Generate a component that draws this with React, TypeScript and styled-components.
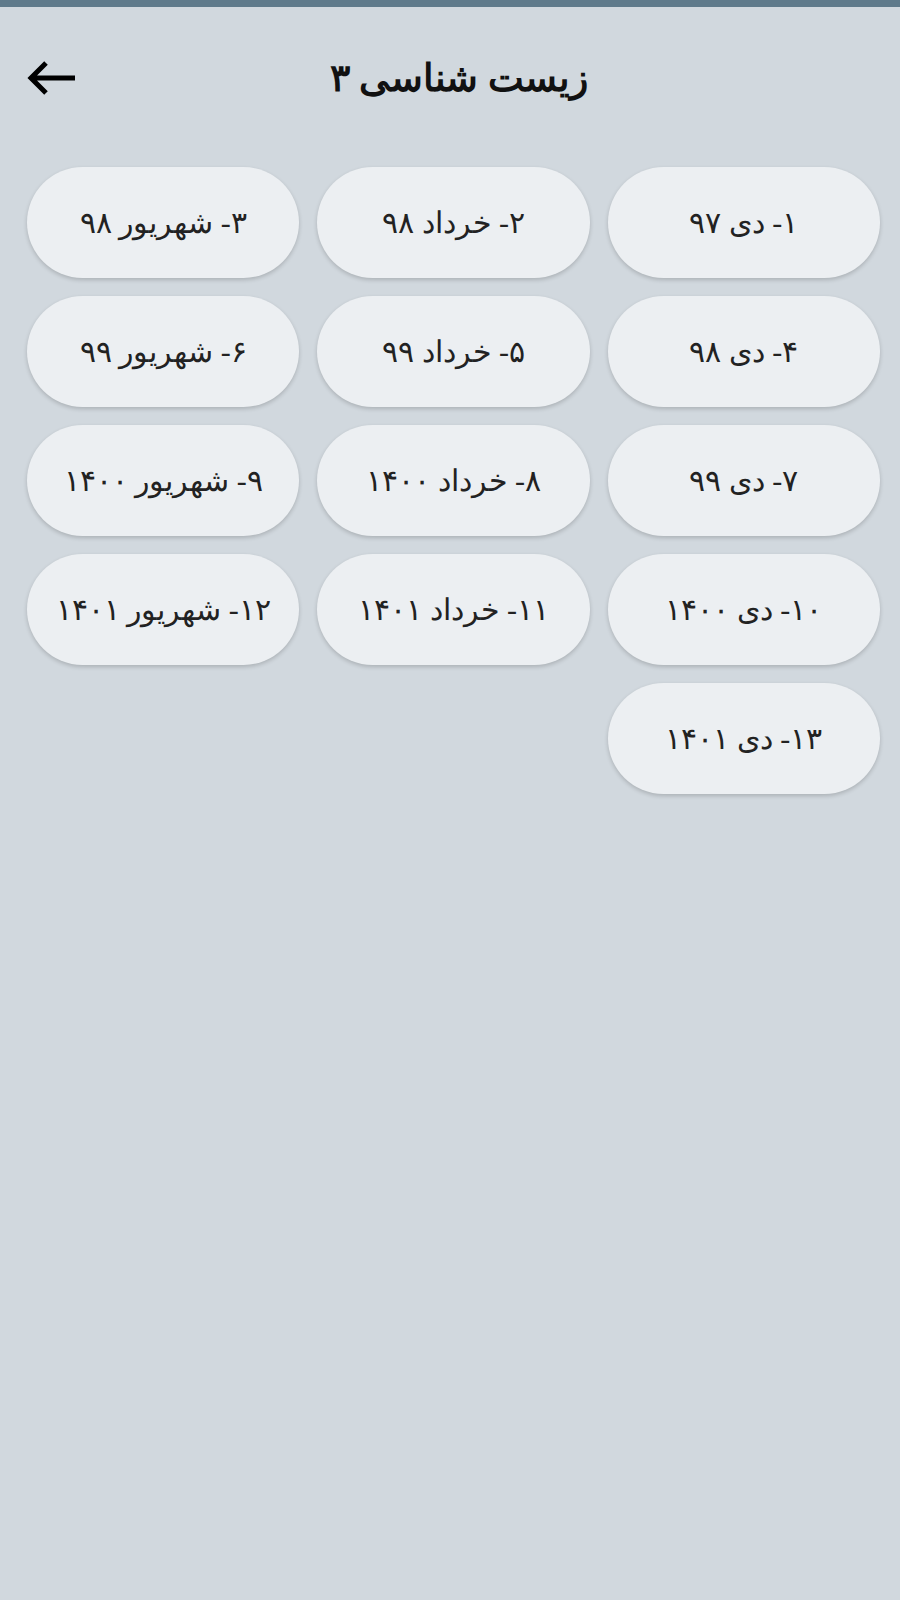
import React from 'react';
import styled, { createGlobalStyle } from 'styled-components';

const GlobalStyle = createGlobalStyle`
  html, body {
    margin: 0;
    padding: 0;
    background: #d1d8de;
  }
  body {
    font-family: "Liberation Serif", "DejaVu Serif", serif;
    color: #1c1c1c;
  }
`;

const Page = styled.div`
  min-height: 1600px;
  background: #d1d8de;
  display: flex;
  flex-direction: column;
`;

const StatusStrip = styled.div`
  height: 7px;
  background: #5f7a8b;
`;

const Header = styled.header`
  height: 142px;
  display: grid;
  grid-template-columns: 1fr auto 1fr;
  align-items: center;
  padding: 0 20px 0 27px;
`;

const BackButton = styled.button`
  justify-self: start;
  border: none;
  background: none;
  padding: 0;
  width: 50px;
  height: 34px;
  display: flex;
  align-items: center;
  cursor: pointer;
`;

const Title = styled.h1`
  margin: 0;
  direction: rtl;
  font-size: 38px;
  font-weight: 700;
  color: #111;
  padding-left: 10px;
`;

const Grid = styled.div`
  direction: rtl;
  display: grid;
  grid-template-columns: repeat(3, 1fr);
  column-gap: 18px;
  row-gap: 18px;
  padding: 18px 20px 0 27px;
`;

const Pill = styled.button`
  height: 111px;
  border: none;
  border-radius: 56px;
  background: #eceff2;
  box-shadow: 0 2px 4px rgba(0, 0, 0, 0.18);
  font-family: inherit;
  font-size: 30px;
  color: #222;
  direction: rtl;
  cursor: pointer;
`;

const items = [
  '۱- دی ۹۷',
  '۲- خرداد ۹۸',
  '۳- شهریور ۹۸',
  '۴- دی ۹۸',
  '۵- خرداد ۹۹',
  '۶- شهریور ۹۹',
  '۷- دی ۹۹',
  '۸- خرداد ۱۴۰۰',
  '۹- شهریور ۱۴۰۰',
  '۱۰- دی ۱۴۰۰',
  '۱۱- خرداد ۱۴۰۱',
  '۱۲- شهریور ۱۴۰۱',
  '۱۳- دی ۱۴۰۱',
];

const BackArrow = () => (
  <svg width="50" height="34" viewBox="0 0 50 34" fill="none">
    <path
      d="M48 17H4M19 2L4 17l15 15"
      stroke="#000"
      strokeWidth="5"
      strokeLinejoin="miter"
    />
  </svg>
);

export default function App() {
  return (
    <Page>
      <GlobalStyle />
      <StatusStrip />
      <Header>
        <BackButton aria-label="back">
          <BackArrow />
        </BackButton>
        <Title>زیست شناسی ۳</Title>
        <span />
      </Header>
      <Grid>
        {items.map(label => (
          <Pill key={label}>{label}</Pill>
        ))}
      </Grid>
    </Page>
  );
}
